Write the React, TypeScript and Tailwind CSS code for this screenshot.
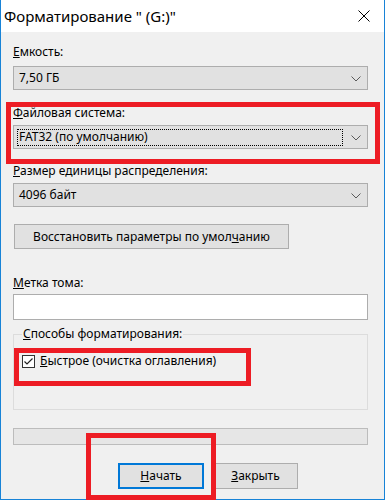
import React from "react";

const Chevron = () => (
  <svg width="10" height="6" viewBox="0 0 10 6" className="block">
    <path d="M0.5 0.5 L5 5 L9.5 0.5" fill="none" stroke="#5a5a5a" strokeWidth="1" />
  </svg>
);

function Combo({ text, focus }: { text: string; focus?: boolean }) {
  return (
    <div className="h-[24px] w-[355px] border border-[#adadad] bg-[#e1e1e1] flex items-center relative">
      <div
        className={
          "ml-[3px] h-[17px] w-[326px] flex items-center pl-[1px] " +
          (focus ? "border border-dotted border-black" : "border border-transparent")
        }
      >
        <span>{text}</span>
      </div>
      <div className="absolute right-[6px] top-[9px]">
        <Chevron />
      </div>
    </div>
  );
}

export default function App() {
  return (
    <div
      className="w-[388px] h-[502px] bg-white relative text-[12px] text-black leading-[16px]"
      style={{ fontFamily: '"Noto Sans", "Liberation Sans", sans-serif' }}
    >
      <div className="w-[385px] h-[500px] border-l border-r border-b border-[#1883d7] bg-[#f0f0f0] flex flex-col">
        {/* title bar */}
        <div className="h-[32px] bg-white flex items-center justify-between pl-[3px] pr-[14px]">
          <span className="text-[15px] leading-[20px] mt-[-1px]">Форматирование " (G:)"</span>
          <svg width="12" height="12" viewBox="0 0 12 12">
            <path d="M0.5 0.5 L11.5 11.5 M11.5 0.5 L0.5 11.5" stroke="#000" strokeWidth="1" />
          </svg>
        </div>
        {/* body */}
        <div className="flex flex-col pl-[12px]">
          <div className="mt-[12px] h-[16px]">
            <u>Е</u>мкость:
          </div>
          <div className="mt-[6px]">
            <Combo text="7,50 ГБ" />
          </div>
          <div className="mt-[15px] h-[16px]">
            <u>Ф</u>айловая система:
          </div>
          <div className="mt-[4px]">
            <Combo text="FAT32 (по умолчанию)" focus />
          </div>
          <div className="mt-[14px] h-[16px]">
            <u>Р</u>азмер единицы распределения:
          </div>
          <div className="mt-[4px]">
            <Combo text="4096 байт" />
          </div>
          <div className="mt-[17px] ml-[1px] w-[275px] h-[25px] border border-[#adadad] bg-[#e1e1e1] flex items-center justify-center">
            <span>
              Восстановить параметры по умол<u>ч</u>анию
            </span>
          </div>
          <div className="mt-[26px] h-[16px]">
            <u>М</u>етка тома:
          </div>
          <div className="mt-[3px] w-[355px] h-[26px] border border-[#adadad] bg-white" />
          {/* group box */}
          <div className="mt-[14px] w-[355px] h-[76px] border border-[#dcdcdc] relative">
            <div className="absolute left-[8px] top-[-9px] bg-[#f0f0f0] px-[1px] h-[16px]">
              <u>С</u>пособы форматирования:
            </div>
            <div className="mt-[18px] ml-[8px] flex items-center">
              <div className="w-[13px] h-[13px] border border-[#333] bg-white flex items-center justify-center">
                <svg width="11" height="11" viewBox="0 0 11 11">
                  <path d="M1.5 5.5 L4 8 L9.5 2.5" fill="none" stroke="#222" strokeWidth="1.2" />
                </svg>
              </div>
              <span className="ml-[5px]">
                <u>Б</u>ыстрое (очистка оглавления)
              </span>
            </div>
          </div>
          {/* progress */}
          <div className="mt-[18px] w-[355px] h-[17px] border border-[#bcbcbc] bg-[#e6e6e6]" />
          {/* buttons */}
          <div className="mt-[18px] flex">
            <div className="ml-[105px] w-[86px] h-[26px] border-2 border-[#0078d7] bg-[#e1e1e1] flex items-center justify-center">
              <span>
                <u>Н</u>ачать
              </span>
            </div>
            <div className="ml-[9px] w-[85px] h-[26px] border border-[#adadad] bg-[#e1e1e1] flex items-center justify-center">
              <span>
                <u>З</u>акрыть
              </span>
            </div>
          </div>
        </div>
      </div>
      {/* red annotation boxes */}
      <div className="absolute left-[6px] top-[102px] w-[374px] h-[62px] border-[5px] border-[#ed1c24]" />
      <div className="absolute left-[14px] top-[348px] w-[237px] h-[38px] border-[5px] border-[#ed1c24]" />
      <div className="absolute left-[86px] top-[433px] w-[130px] h-[67px] border-[5px] border-[#ed1c24]" />
    </div>
  );
}
